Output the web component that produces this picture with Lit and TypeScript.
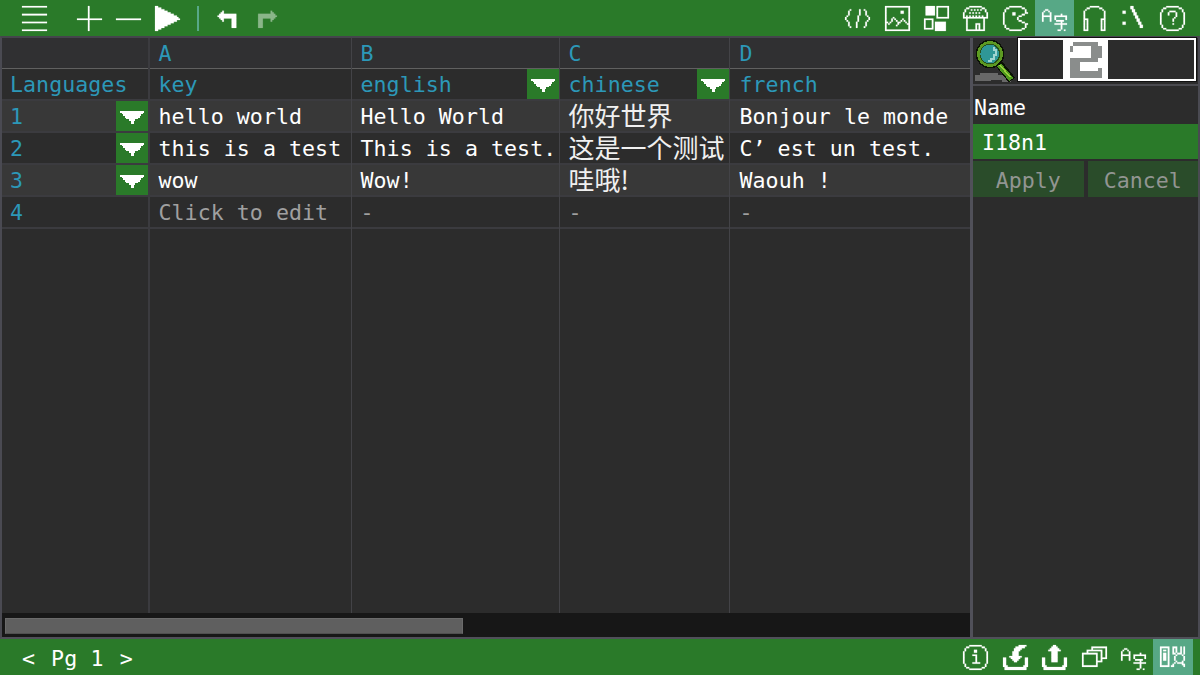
import { LitElement, html, svg, css, nothing } from 'lit';
import { customElement, property } from 'lit/decorators.js';
import { classMap } from 'lit/directives/class-map.js';

const ICONS: Record<string, string[]> = {
  menu: ['################', '', '', '', '', '################', '', '', '', '', '################', '', '', '', '', '################'],
  plus: [...Array(8).fill('.......#'), '################', ...Array(7).fill('.......#')],
  minus: ['', '', '', '', '', '', '', '', '################'],
  play: ['##', '####', '######', '########', '##########', '############', '##############', '###############', '################', '##############', '############', '##########', '########', '######', '####', '##'],
  undo: ['', '', '', '....#', '...##', '..###########', '.############', '..###########', '...##.....###', '....#.....###', '..........###', '..........###', '..........###', '..........###'],
  redo: ['', '', '', '..........#', '..........##', '..###########', '..############', '..###########', '..###.....##', '..###.....#', '..###', '..###', '..###', '..###'],
  code: ['', '', '...#.....#..#', '..#......#...#', '..#......#...#', '..#......#...#', '.#......#.....#', '#.......#......#', '#.......#......#', '.#......#.....#', '..#....#.....#', '..#....#.....#', '..#....#.....#', '...#...#....#'],
  image: ['################', '#..............#', '#..............#', '#.........##...#', '#.........##...#', '#..............#', '#..............#', '#....#.........#', '#...#.#....#...#', '#...#..#..#.#..#', '##.#....##...#.#', '#.#.....#.....##', '#......#.......#', '#..............#', '#..............#', '################'],
  blocks: ['.######.########', '.######.#......#', '.######.#......#', '.######.#......#', '.######.#......#', '.######.#......#', '........#......#', '........########', '######', '#....#', '#....#.#######', '#....#.#######', '#....#.#######', '#....#.#######', '######.#######', '.......#######'],
  house: ['....########', '..##........##', '.#...#.#.#.#..#', '.#............#', '#...#.#.#.#....#', '#..............#', '#.#.#.#.#.#.#..#', '################', '..#..........#', '..#..........#', '..#..........#', '..#.....###..#', '..#.....#.#..#', '..#.....#.#..#', '..#.....#.#..#', '..############'],
  pac: ['....########', '..##........##', '.#............#', '.#............#', '#.....##......##', '#.....##....##', '#.........##', '#........#', '#........#', '#.........##', '#...........##', '#.............##', '.#............#', '.#............#', '..##........##', '....########'],
  lang: ['', '', '..##', '.#..#', '#....#', '#....#......#', '######..########', '#....#..#......#', '#....#..#......#', '#....#...#####', '............#', '........########', '............#', '............#', '............#', '..........##..#'],
  phones: ['.....######', '...##......##', '..#..........#', '.#............#', '.#............#', '.#............#', '.#............#', '.#............#', '.###........###', '.#.#........#.#', '.#.#........#.#', '.#.#........#.#', '.#.#........#.#', '.#.#........#.#', '.#.#........#.#', '.###........###'],
  drive: ['......##', '......##', '.......##', '.##....##', '.##.....##', '........##', '.........##', '.........##', '..........##', '..........##', '.##........##', '.##........##', '............##', '............##'],
  help: ['....########', '..##........##', '.#............#', '.#....####....#', '#....#....#....#', '#....#....#....#', '#.........#....#', '#........#.....#', '#.......#......#', '#.......#......#', '#..............#', '#.......#......#', '.#............#', '.#............#', '..##........##', '....########'],
  info: ['....########', '..##........##', '.#............#', '.#.....##.....#', '#......##......#', '#..............#', '#.....###......#', '#.......#......#', '#.......#......#', '#.......#......#', '#.......#......#', '#.....#####....#', '.#............#', '.#............#', '..##........##', '....########'],
  load: ['..........#####', '........######', '.......#####', '.......####', '......####', '......####', '......####', '....########', '##...######...##', '##....####....##', '##.....##.....##', '##............##', '##............##', '###..........###', '.##############', '.##############'],
  save: ['.......##', '......####', '.....######', '....########', '......####', '......####', '......####', '......####', '##....####....##', '##....####....##', '##....####....##', '##............##', '##............##', '###..........###', '.##############', '.##############'],
  windows: ['', '......##########', '......#........#', '...##########..#', '...#........#..#', '##########..#..#', '#........#..#..#', '#........#..#..#', '#........#..####', '#........#..#', '#........####', '#........#', '#........#', '##########'],
  inspect: ['', '######..###..#.#', '#....#..#.#..#.#', '#.##.#..#.#..#.#', '#....#..#.#..#.#', '#.##.#..##.###.#', '#.##.#....#...#', '#.##.#...#.....#', '#.##.#...#.....#', '#.##.#...#.....#', '#....#....#...#', '#....#...#.####', '#....#..#.....##', '######.##......#'],
};

const bitmapPath = (rows: string[]) =>
  rows
    .map((row, y) => [...row.matchAll(/#+/g)].map((m) => `M${m.index} ${y}h${m[0].length}v1h-${m[0].length}z`).join(''))
    .join('');

@customElement('pixel-icon')
class PixelIcon extends LitElement {
  @property() name = '';
  static styles = css`
    :host { display: block; width: 25px; height: 25px; }
    svg { display: block; width: 100%; height: 100%; fill: #fff; stroke: #fff; stroke-width: .12; overflow: visible; }
  `;
  render() {
    return html`<svg viewBox="0 0 16 16">${svg`<path d=${bitmapPath(ICONS[this.name] ?? [])}></path>`}</svg>`;
  }
}

interface Cell { text: unknown; kind?: string; menu?: boolean; }
interface Row { kind: string; cells: Cell[]; }

const ROWS: Row[] = [
  { kind: 'letters', cells: [{ text: '' }, { text: 'A' }, { text: 'B' }, { text: 'C' }, { text: 'D' }] },
  { kind: 'names', cells: [{ text: 'Languages' }, { text: 'key' }, { text: 'english', menu: true }, { text: 'chinese', menu: true }, { text: 'french' }] },
  { kind: 'odd', cells: [{ text: '1', menu: true }, { text: 'hello world' }, { text: 'Hello World' }, { text: '你好世界', kind: 'cjk' }, { text: 'Bonjour le monde' }] },
  { kind: 'even', cells: [{ text: '2', menu: true }, { text: 'this is a test' }, { text: 'This is a test.' }, { text: '这是一个测试', kind: 'cjk' }, { text: html`C<span class="wide">’</span>est un test.` }] },
  { kind: 'odd', cells: [{ text: '3', menu: true }, { text: 'wow' }, { text: 'Wow!' }, { text: '哇哦!', kind: 'cjk' }, { text: 'Waouh !' }] },
  { kind: 'even blank', cells: [{ text: '4' }, { text: 'Click to edit' }, { text: '-' }, { text: '-' }, { text: '-' }] },
  { kind: 'rest', cells: [{ text: '' }, { text: '' }, { text: '' }, { text: '' }, { text: '' }] },
];

@customElement('app-root')
class AppRoot extends LitElement {
  static styles = css`
    :host {
      display: flex; flex-direction: column; width: 1200px; height: 675px; overflow: hidden;
      box-sizing: border-box; background: #2c2c2c; color: #fff;
      font: 21.6px/32px "DejaVu Sans Mono", "Noto Sans CJK SC", monospace;
    }
    * { box-sizing: border-box; }
    .bar { display: flex; align-items: center; background: #2a7a29; height: 36px; flex: none; padding-right: 7.5px; }
    .tool { width: 39.375px; height: 36px; display: flex; align-items: center; justify-content: center; flex: none; }
    .tool.on { background: #57a886; }
    .tool.dim pixel-icon { opacity: .45; }
    .tool.first { margin-left: 14.5px; margin-right: 15.5px; }
    .rule { width: 2px; height: 25px; background: #58a888; margin: 0 9.5px; }
    .fill { flex: 1; }
    .pager { padding-left: 22px; white-space: pre; display: flex; line-height: 39px; height: 36px; }
    .pager .page { margin: 0 16px 0 16px; letter-spacing: .2px; }
    .main { flex: 1; display: flex; min-height: 0; border: 2px solid #4a4a52; border-top-color: #45454c; border-bottom-color: #505059; }
    .sheet { width: 968px; display: flex; flex-direction: column; flex: none; }
    .row { display: grid; grid-template-columns: 148px 202px 208px 170px 240px; height: 32px; flex: none; border-bottom: 2px solid #3b3b3f; }
    .cell { display: flex; border-right: 1px solid #434347; padding-left: 8.5px; white-space: pre; justify-content: space-between; letter-spacing: .05px; }
    .cell:first-child { border-right: 2px solid #3b3b3f; padding-left: 8px; }
    .cell:last-child { border-right: 0; padding-left: 9.5px; }
    .letters { height: 31px; background: #303032; border-bottom: 1px solid #606060; color: #2c98b8; }
    .names { color: #2c98b8; }
    .odd { background: #383838; }
    .row .cell:first-child { color: #2c98b8; }
    .blank .cell:not(:first-child) { color: #a0a0a0; }
    .rest { flex: 1; border-bottom: 0; height: auto; }
    .cjk { font: 26px/28px "Noto Sans CJK SC", sans-serif; letter-spacing: 0; color: #f0f0f0; height: 28px; }
    .wide { letter-spacing: 12px; }
    .drop { width: 32px; height: 30px; background: #2a7a29; display: flex; align-items: center; justify-content: center; flex: none; }
    .drop svg { width: 24px; height: 13px; margin-top: 3px; }
    .scroll { height: 24px; background: #171717; padding: 5px 3px; flex: none; }
    .thumb { width: 458px; height: 16px; background: #5f5f5f; border: 1px solid #6b6b6b; border-bottom-color: #505050; }
    .side { flex: 1; display: flex; flex-direction: column; border-left: 3px solid #505059; }
    .head { height: 46px; display: flex; padding-left: 1px; flex: none; }
    .lens { width: 44px; height: 46px; display: block; }
    .preview { width: 178px; height: 43px; border: 2px solid #fff; padding-left: 43px; outline: 1px solid #111; }
    .preview svg { display: block; width: 45px; height: 39px; }
    .line { height: 2px; background: #4a4a4f; }
    .label { height: 38px; line-height: 38px; padding: 3px 0 0 1px; }
    .field { height: 35px; line-height: 38px; background: #2a7a29; padding-left: 9px; margin-bottom: 2px; }
    .buttons { display: grid; grid-template-columns: 1fr 1fr; gap: 4px; }
    .button { height: 36px; background: #2a4c2a; color: #929592; text-align: center; line-height: 40px; }
  `;

  tool(name: string, extra = '') {
    return html`<div class="tool ${extra}"><pixel-icon name=${name}></pixel-icon></div>`;
  }

  cell(c: Cell) {
    return html`<div class="cell">
      <span class=${classMap({ cjk: c.kind === 'cjk' })}>${c.text}</span>${c.menu
        ? html`<div class="drop"><svg viewBox="0 0 16 8" preserveAspectRatio="none" shape-rendering="crispEdges"><path fill="#fff" d="M0 0h16v1h-1v1h-1v1h-1v1h-1v1h-2v1h-1v2h-2v-2h-1v-1h-2v-1h-1v-1h-1v-1h-1v-1h-1z"></path></svg></div>`
        : nothing}</div>`;
  }

  render() {
    return html`
      <div class="bar">
        ${this.tool('menu', 'first')}${this.tool('plus')}${this.tool('minus')}${this.tool('play')}
        <div class="rule"></div>
        ${this.tool('undo')}${this.tool('redo', 'dim')}
        <div class="fill"></div>
        ${['code', 'image', 'blocks', 'house', 'pac'].map((n) => this.tool(n))}
        ${this.tool('lang', 'on')}
        ${['phones', 'drive', 'help'].map((n) => this.tool(n))}
      </div>
      <div class="main">
        <div class="sheet">
          ${ROWS.map((r) => html`<div class="row ${r.kind}">${r.cells.map((c) => this.cell(c))}</div>`)}
          <div class="scroll"><div class="thumb"></div></div>
        </div>
        <div class="side">
          <div class="head">
            <svg class="lens" viewBox="0 0 44 46" shape-rendering="crispEdges">
              <path fill="#686868" d="M1 37h5v-2h18v2h7v2h6v5h-9v-2h-11v1h-16z"></path>
              <path stroke="#0b1205" stroke-width="8" d="M25 26L38 42"></path>
              <circle cx="16" cy="16" r="14.3" fill="#0b1205"></circle>
              <circle cx="16" cy="16" r="12.8" fill="#5d9a22"></circle>
              <circle cx="16" cy="16" r="10.4" fill="#28501a"></circle>
              <circle cx="15.7" cy="16" r="9.4" fill="#2f9797"></circle>
              <path stroke="#a0d5d0" stroke-width="2" fill="none" d="M20 9v3h2v5h-2v4h-3v2h-3"></path>
              <path stroke="#4f9a1e" stroke-width="5" d="M25 27L37.5 41.5"></path>
              <path stroke="#9ad03a" stroke-width="1.5" d="M26 27L36 39"></path>
            </svg>
            <div class="preview">
              <svg viewBox="0 0 45 39" preserveAspectRatio="none" shape-rendering="crispEdges">
                <rect width="45" height="39" fill="#fff"></rect>
                <path fill="#8a8d8c" d="M10 2h25v4h4v12h-4v4H17v9h18v-3h4v10H7V18h21V6H10v6H7V6h3z"></path>
              </svg>
            </div>
          </div>
          <div class="line"></div>
          <div class="label">Name</div>
          <div class="field">I18n1</div>
          <div class="buttons"><div class="button">Apply</div><div class="button">Cancel</div></div>
        </div>
      </div>
      <div class="bar">
        <div class="pager"><span>&lt;</span><span class="page">Pg 1</span><span>&gt;</span></div>
        <div class="fill"></div>
        ${['info', 'load', 'save', 'windows', 'lang'].map((n) => this.tool(n))}
        ${this.tool('inspect', 'on')}
      </div>
    `;
  }
}
